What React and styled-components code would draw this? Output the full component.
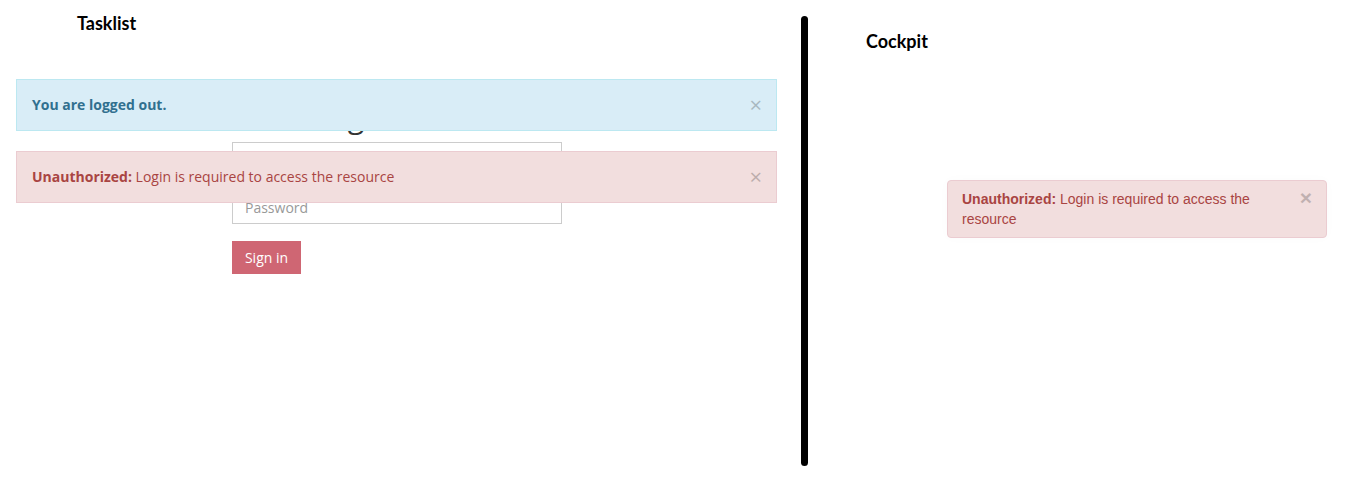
import React from "react";
import styled, { createGlobalStyle } from "styled-components";

const GlobalStyle = createGlobalStyle`
  html, body {
    margin: 0;
    padding: 0;
    background: #fff;
  }
`;

const Page = styled.div`
  display: flex;
  align-items: flex-start;
  width: 1369px;
  height: 484px;
  overflow: hidden;
`;

const LeftPane = styled.div`
  position: relative;
  width: 801px;
  flex-shrink: 0;
  height: 484px;
`;

const RightPane = styled.div`
  flex: 1;
  height: 484px;
`;

const Divider = styled.div`
  width: 7px;
  height: 450px;
  margin-top: 16px;
  background: #000;
  border-radius: 4px;
  flex-shrink: 0;
`;

const PaneTitle = styled.div`
  font-family: Lato, "Liberation Sans", sans-serif;
  font-weight: 700;
  font-size: 18px;
  line-height: 20px;
  color: #000;
  padding-top: ${(p) => p.$top}px;
  padding-left: ${(p) => p.$left}px;
`;

const LoginForm = styled.form`
  width: 330px;
  margin-left: 232px;
  margin-top: 66px;
  display: flex;
  flex-direction: column;
`;

const LoginHeading = styled.h2`
  margin: 0 0 7px 82px;
  font-family: "Open Sans", sans-serif;
  font-weight: 400;
  font-size: 30px;
  line-height: 36px;
  color: #333;
`;

const Input = styled.input`
  box-sizing: border-box;
  width: 330px;
  height: 34px;
  margin: 0;
  margin-top: ${(p) => (p.$stacked ? "14px" : "0")};
  padding: 0 12px;
  border: 1px solid #ccc;
  border-radius: 0;
  font-family: "Open Sans", sans-serif;
  font-size: 14px;
  color: #555;
  outline: none;
  &::placeholder {
    color: #999;
  }
`;

const SignInButton = styled.button`
  align-self: flex-start;
  margin-top: 17px;
  width: 69px;
  height: 33px;
  padding: 0;
  border: none;
  border-radius: 0;
  background: #cf6673;
  color: #fff;
  font-family: "Open Sans", sans-serif;
  font-size: 14px;
  line-height: 33px;
`;

const FlatAlert = styled.div`
  position: absolute;
  left: 16px;
  top: ${(p) => p.$top}px;
  box-sizing: border-box;
  width: 761px;
  height: 52px;
  padding: 15px 40px 15px 15px;
  font-family: "Open Sans", sans-serif;
  font-size: 14px;
  line-height: 20px;
  background: ${(p) => (p.$kind === "info" ? "#d9edf7" : "#f2dede")};
  border: 1px solid ${(p) => (p.$kind === "info" ? "#bce8f1" : "#ebccd1")};
  color: ${(p) => (p.$kind === "info" ? "#31708f" : "#a94442")};
  b {
    font-weight: 700;
  }
`;

const FlatClose = styled.span`
  position: absolute;
  right: 14px;
  top: 10px;
  font-family: "Open Sans", sans-serif;
  font-size: 22px;
  line-height: 28px;
  color: #000;
  opacity: 0.22;
`;

const RoundedAlert = styled.div`
  position: relative;
  box-sizing: border-box;
  width: 380px;
  margin-left: 139px;
  margin-top: 129px;
  padding: 8px 35px 8px 14px;
  background: #f2dede;
  border: 1px solid #ebccd1;
  border-radius: 4px;
  color: #a94442;
  font-family: "Liberation Sans", Arial, sans-serif;
  font-size: 14px;
  line-height: 20px;
  box-shadow: 0 0 12px rgba(0, 0, 0, 0.02);
  b {
    font-weight: 700;
  }
`;

const BoldClose = styled.span`
  position: absolute;
  top: 6px;
  right: 14px;
  font-family: "Liberation Sans", Arial, sans-serif;
  font-size: 21px;
  font-weight: 700;
  line-height: 1;
  color: #000;
  opacity: 0.2;
`;

export default function App() {
  return (
    <>
      <GlobalStyle />
      <Page>
        <LeftPane>
          <PaneTitle $top={13} $left={77}>Tasklist</PaneTitle>
          <LoginForm onSubmit={(e) => e.preventDefault()}>
            <LoginHeading>Login</LoginHeading>
            <Input type="text" placeholder="Username" />
            <Input type="password" placeholder="Password" $stacked />
            <SignInButton type="submit">Sign in</SignInButton>
          </LoginForm>
          <FlatAlert $kind="info" $top={79}>
            <b>You are logged out.</b>
            <FlatClose>×</FlatClose>
          </FlatAlert>
          <FlatAlert $kind="danger" $top={151}>
            <b>Unauthorized:</b> Login is required to access the resource
            <FlatClose>×</FlatClose>
          </FlatAlert>
        </LeftPane>
        <Divider />
        <RightPane>
          <PaneTitle $top={31} $left={58}>Cockpit</PaneTitle>
          <RoundedAlert>
            <b>Unauthorized:</b> Login is required to access the resource
            <BoldClose>×</BoldClose>
          </RoundedAlert>
        </RightPane>
      </Page>
    </>
  );
}
